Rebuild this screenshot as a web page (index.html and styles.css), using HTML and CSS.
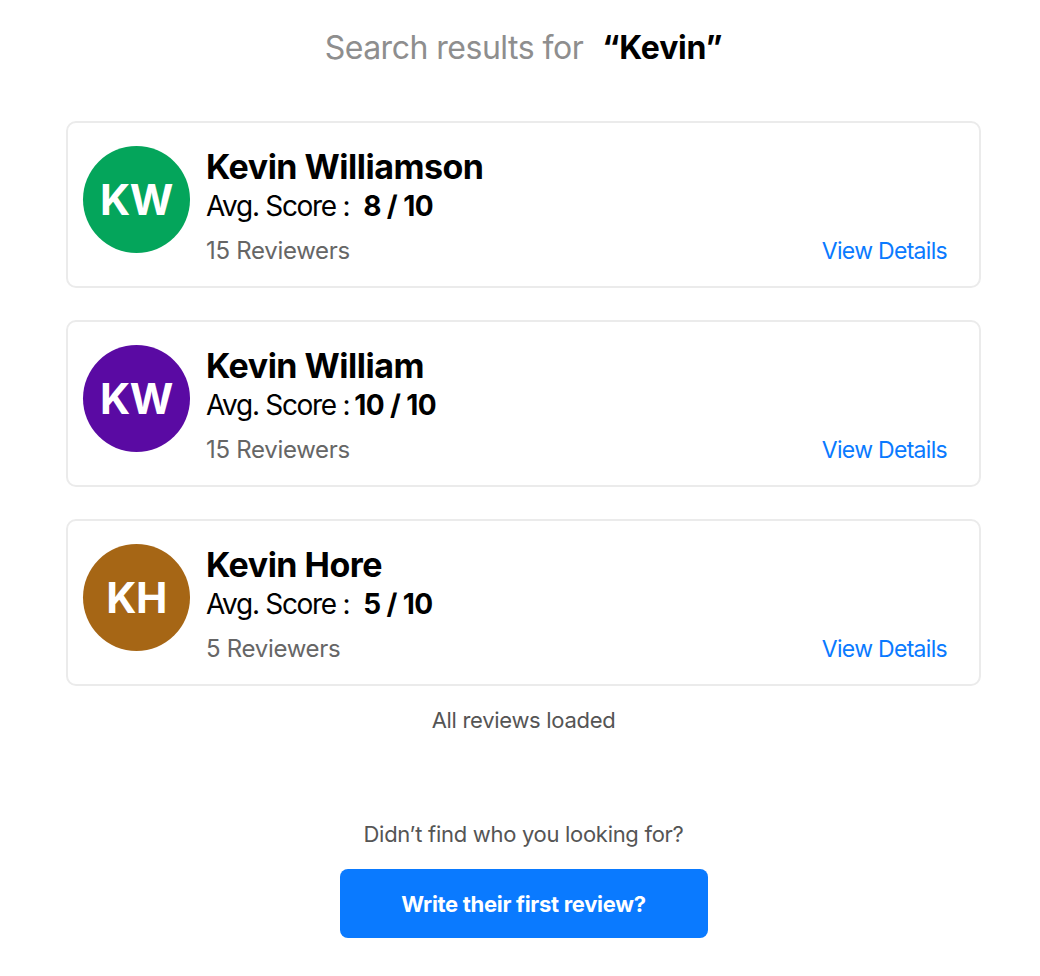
FILE: index.html
```html
<!DOCTYPE html>
<html lang="en">
<head>
<meta charset="utf-8">
<title>Search results</title>
<link rel="stylesheet" href="styles.css">
</head>
<body>
<main class="page">
  <h1 class="title"><span class="title-label">Search results for</span><span class="title-query">“Kevin”</span></h1>

  <section class="results">
    <article class="card">
      <div class="avatar avatar-green">KW</div>
      <div class="info">
        <h2 class="name">Kevin Williamson</h2>
        <p class="score"><span class="label">Avg. Score :</span><b>8 / 10</b></p>
        <div class="meta">
          <span class="reviewers">15 Reviewers</span>
          <a class="details" href="#">View Details</a>
        </div>
      </div>
    </article>

    <article class="card">
      <div class="avatar avatar-purple">KW</div>
      <div class="info">
        <h2 class="name">Kevin William</h2>
        <p class="score"><span class="label">Avg. Score :</span><b class="tight">10 / 10</b></p>
        <div class="meta">
          <span class="reviewers">15 Reviewers</span>
          <a class="details" href="#">View Details</a>
        </div>
      </div>
    </article>

    <article class="card">
      <div class="avatar avatar-brown">KH</div>
      <div class="info">
        <h2 class="name">Kevin Hore</h2>
        <p class="score"><span class="label">Avg. Score :</span><b>5 / 10</b></p>
        <div class="meta">
          <span class="reviewers">5 Reviewers</span>
          <a class="details" href="#">View Details</a>
        </div>
      </div>
    </article>
  </section>

  <p class="loaded">All reviews loaded</p>

  <p class="prompt">Didn’t find who you looking for?</p>
  <button class="cta" type="button">Write their first review?</button>
</main>
</body>
</html>
```

FILE: styles.css
```css
* { box-sizing: border-box; }

html, body {
  margin: 0;
  padding: 0;
  background: #ffffff;
}

body {
  font-family: Inter, "Noto Sans", "Liberation Sans", sans-serif;
  color: #000;
}

.page {
  width: 915px;
  margin-left: 66px;
  display: flex;
  flex-direction: column;
  align-items: center;
}

.title {
  margin: 28px 0 0;
  font-size: 32px;
  line-height: 40px;
  font-weight: 400;
  letter-spacing: -0.5px;
  display: flex;
  gap: 19px;
}

.title-label { color: #8e8e8e; }
.title-query { font-weight: 700; color: #000; letter-spacing: -0.2px; }

.results {
  margin-top: 53px;
  width: 100%;
  display: flex;
  flex-direction: column;
  gap: 32px;
}

.card {
  height: 167px;
  border: 2px solid #ebebeb;
  border-radius: 10px;
  padding: 23px 32px 0 15px;
  display: flex;
  align-items: flex-start;
  gap: 16px;
}

.avatar {
  flex: none;
  width: 107px;
  height: 107px;
  border-radius: 50%;
  color: #fff;
  font-size: 42px;
  font-weight: 700;
  display: flex;
  align-items: center;
  justify-content: center;
  letter-spacing: -0.5px;
}

.avatar-green { background: #04a55b; }
.avatar-purple { background: #5a0aa3; }
.avatar-brown { background: #a66615; }

.info {
  flex: 1;
  display: flex;
  flex-direction: column;
}

.name {
  margin: 2px 0 0;
  font-size: 34px;
  line-height: 38px;
  font-weight: 700;
  letter-spacing: -0.5px;
}

.score {
  margin: 1px 0 0;
  font-size: 28px;
  line-height: 38px;
  display: flex;
  align-items: baseline;
}

.score .label { letter-spacing: -1.3px; }
.score b { font-weight: 700; margin-left: 14px; letter-spacing: -0.6px; }
.score b.tight { margin-left: 5px; }

.meta {
  margin-top: 10px;
  display: flex;
  justify-content: space-between;
  align-items: baseline;
  font-size: 24px;
  line-height: 32px;
}

.reviewers { color: #666666; letter-spacing: -0.3px; }

.details {
  color: #0a7aff;
  font-size: 23px;
  text-decoration: none;
  letter-spacing: -0.7px;
}

.loaded {
  margin: 19px 0 0;
  font-size: 22px;
  line-height: 30px;
  color: #555555;
  letter-spacing: -0.3px;
}

.prompt {
  margin: 84px 0 0;
  font-size: 22px;
  line-height: 30px;
  color: #555555;
  letter-spacing: -0.3px;
}

.cta {
  margin-top: 20px;
  width: 368px;
  height: 69px;
  border: 0;
  border-radius: 8px;
  background: #0a7aff;
  color: #fff;
  font-family: inherit;
  font-size: 22px;
  font-weight: 700;
  letter-spacing: -0.3px;
  cursor: pointer;
}
```
